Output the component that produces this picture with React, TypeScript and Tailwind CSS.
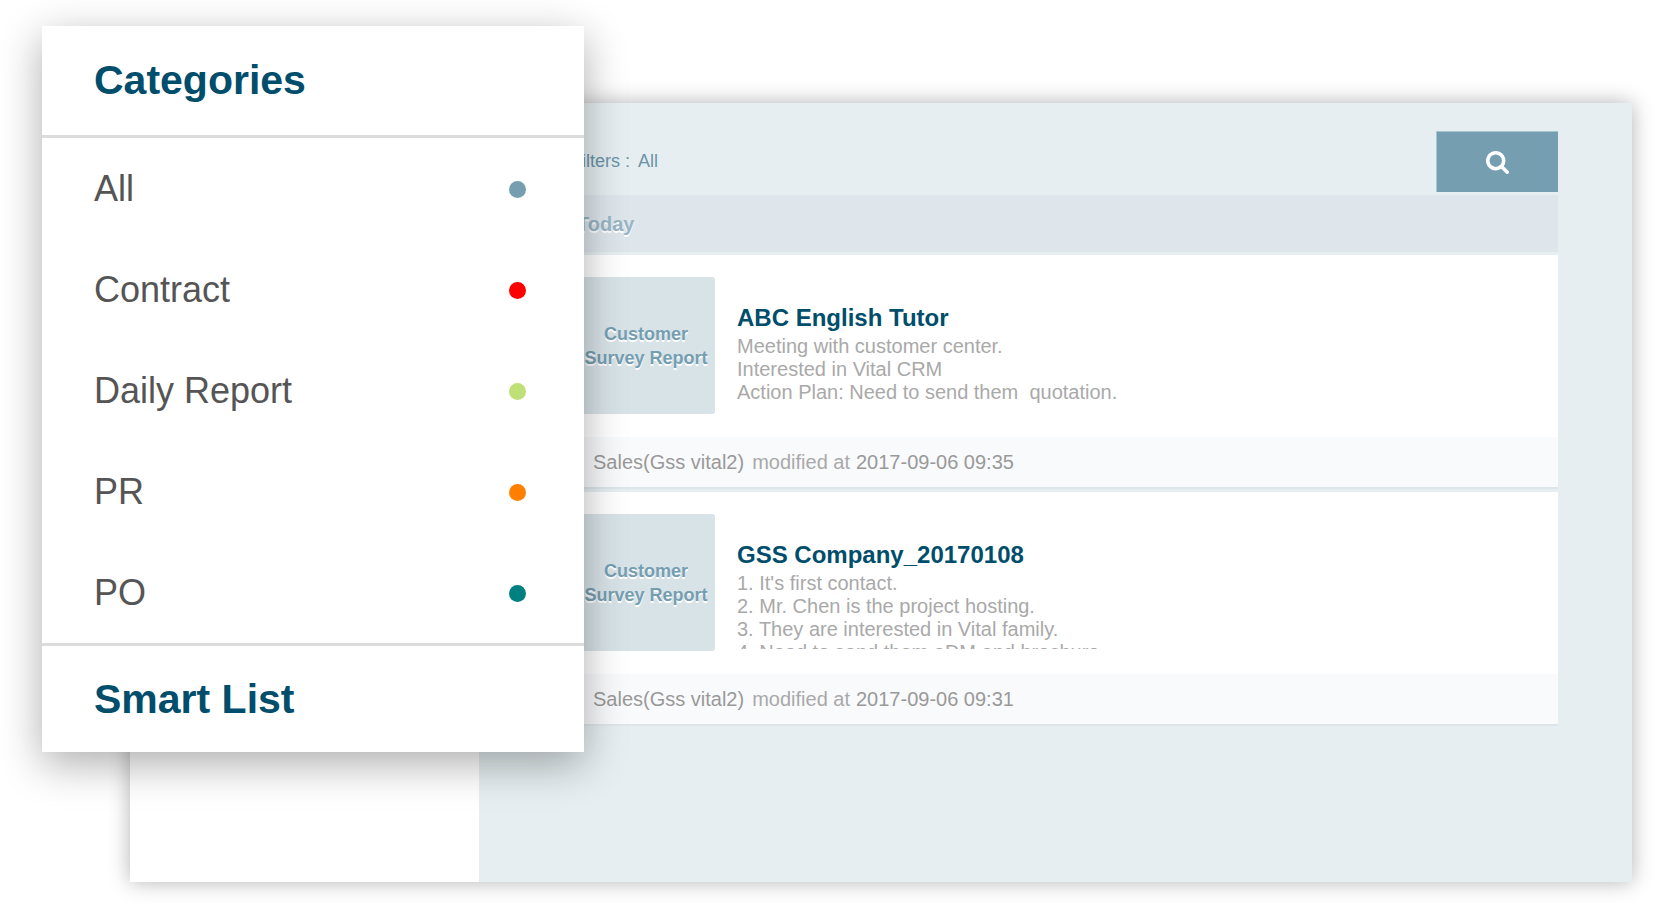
const CATEGORIES = [
  { name: 'All', dot: 'bg-[#769eb1]' },
  { name: 'Contract', dot: 'bg-[#ff0000]' },
  { name: 'Daily Report', dot: 'bg-[#bfe077]' },
  { name: 'PR', dot: 'bg-[#ff8000]' },
  { name: 'PO', dot: 'bg-[#008080]' },
];

const RECORDS = [
  {
    title: 'ABC English Tutor',
    lines: [
      'Meeting with customer center.',
      'Interested in Vital CRM',
      'Action Plan: Need to send them  quotation.',
    ],
    modified: '2017-09-06 09:35',
  },
  {
    title: 'GSS Company_20170108',
    lines: [
      "1. It's first contact.",
      '2. Mr. Chen is the project hosting.',
      '3. They are interested in Vital family.',
      '4. Need to send them eDM and brochure.',
    ],
    modified: '2017-09-06 09:31',
  },
];

function SearchIcon() {
  return (
    <svg width="23" height="23" viewBox="0 128 1664 1664" fill="currentColor" aria-hidden="true">
      <path d="M1152 832q0-185-131.5-316.5T704 384 387.5 515.5 256 832t131.5 316.5T704 1280t316.5-131.5T1152 832zm512 832q0 52-38 90t-90 38q-54 0-90-38l-343-342q-179 124-399 124-143 0-273.5-55.5t-225-150-150-225T0 832t55.5-273.5 150-225 225-150T704 128t273.5 55.5 225 150 150 225T1408 832q0 220-124 399l343 343q37 37 37 90z" />
    </svg>
  );
}

function RecordCard({ record }: { record: (typeof RECORDS)[number] }) {
  return (
    <article className="border-b-2 border-[#dde6eb] bg-white">
      <div className="flex gap-[22px] px-[22px] pt-[22px] pb-[23px]">
        <div className="flex h-[137px] w-[138px] shrink-0 items-center justify-center rounded-[3px] bg-[#d8e3e8] text-center text-[18px] leading-[24px] font-bold text-[#769eb1] [text-shadow:0_2px_0_#fff]">
          Customer
          <br />
          Survey Report
        </div>
        <div className="min-w-0 pt-[25px]">
          <h3 className="text-[24px] leading-[32px] font-bold text-[#004e6c]">{record.title}</h3>
          {/* only about three lines fit, the rest is clipped */}
          <div className="mt-px max-h-[77px] overflow-hidden text-[20px] leading-[23px] whitespace-pre text-[#a9a9a9]">
            {record.lines.map((line) => (
              <p key={line}>{line}</p>
            ))}
          </div>
        </div>
      </div>
      <footer className="flex h-[50px] items-center bg-[#f9fafc] pl-[38px] text-[20px] leading-[24px] text-[#999]">
        <span>Sales(Gss vital2)</span>
        <span className="mr-1.5 ml-2 text-[#a9a9a9]">modified at</span>
        <time>{record.modified}</time>
      </footer>
    </article>
  );
}

function CategoryPanel() {
  return (
    <nav className="absolute top-[26px] left-[42px] w-[542px] bg-white shadow-[0_12px_40px_rgba(0,0,0,0.32)]">
      <h2 className="flex h-[109px] items-center px-[52px] pb-0.5 text-[41px] leading-[48px] font-bold text-[#004e6c]">
        Categories
      </h2>
      <ul className="border-y-[3px] border-[#dcdcdc]">
        {CATEGORIES.map((cat) => (
          <li key={cat.name}>
            <a
              href="#"
              className="flex h-[101px] items-center justify-between pr-[58px] pl-[52px] text-[36px] leading-[42px] text-[#555]"
            >
              {cat.name}
              <span className={`mt-0.5 size-[17px] rounded-full ${cat.dot}`} />
            </a>
          </li>
        ))}
      </ul>
      <h2 className="flex h-[106px] items-center px-[52px] text-[41px] leading-[48px] font-bold text-[#004e6c]">
        Smart List
      </h2>
    </nav>
  );
}

export default function App() {
  return (
    <div className="relative bg-white pt-[103px] pr-6 pb-[22px] pl-[130px] font-['Liberation_Sans',Arial,sans-serif]">
      <div className="flex shadow-[0_0_20px_rgba(0,0,0,0.3)]">
        <aside className="w-[349px] shrink-0 bg-white" />
        <main className="min-w-0 flex-1 bg-[#e6eef1] pt-7 pr-[74px] pb-[156px] pl-[76px]">
          <header className="flex items-center justify-between pl-4">
            <p className="flex gap-2 pb-0.5 text-[18px] leading-[24px] text-[#6a94a8]">
              <span>Filters :</span>
              <span>All</span>
            </p>
            <button
              type="button"
              aria-label="Search"
              className="flex h-[61px] w-[122px] items-center justify-center border-t border-l border-[#a9c3cf] bg-[#769eb1] text-white"
            >
              <SearchIcon />
            </button>
          </header>
          <h2 className="mt-[3px] flex h-[57px] items-center bg-[#dee6ec] px-[22px] text-[20px] leading-[24px] font-bold text-[#98b6c5] [text-shadow:0_2px_0_#fff]">
            Today
          </h2>
          <div className="mt-[3px] flex flex-col gap-[3px]">
            {RECORDS.map((record) => (
              <RecordCard key={record.title} record={record} />
            ))}
          </div>
        </main>
      </div>
      <CategoryPanel />
    </div>
  );
}
